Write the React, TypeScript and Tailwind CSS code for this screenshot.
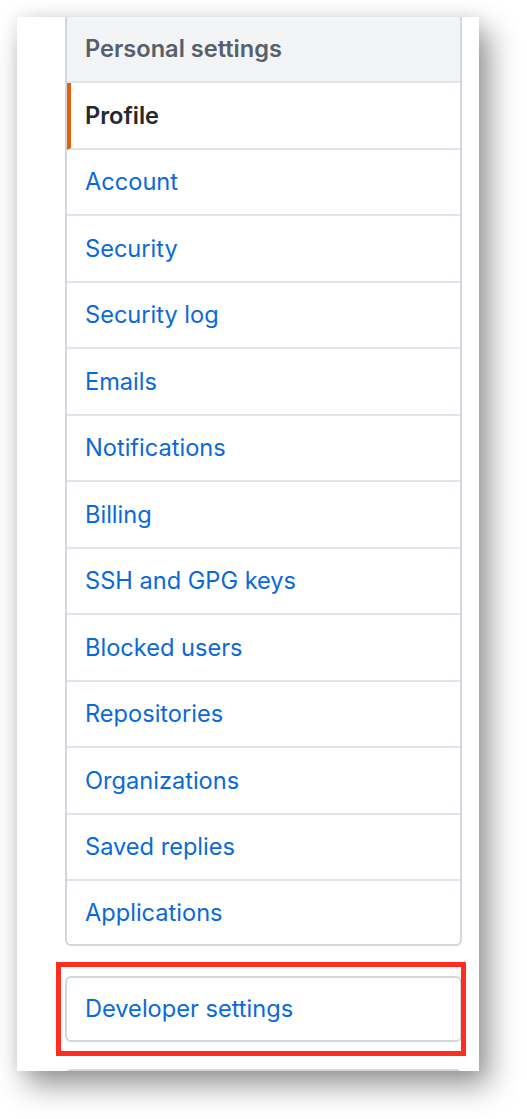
const items = [
  'Account',
  'Security',
  'Security log',
  'Emails',
  'Notifications',
  'Billing',
  'SSH and GPG keys',
  'Blocked users',
  'Repositories',
  'Organizations',
  'Saved replies',
  'Applications',
];

export default function App() {
  return (
    <div className="min-h-[1119px] w-[527px] bg-white pt-[17px] pl-[17px] font-['Inter',sans-serif]">
      <div className="relative h-[1054px] w-[462px] overflow-hidden bg-white pl-[48px] pr-[17px] shadow-[10px_14px_28px_rgba(0,0,0,0.42),0_0_14px_rgba(0,0,0,0.08)]">
        <nav className="rounded-b-[6px] border-2 border-t-0 border-[#d0d7de] text-[23.6px]">
          <div className="flex h-[66px] items-center border-b-2 border-[#e1e4e8] bg-[#f3f4f6] pl-[18px] font-semibold text-[#57606a]">
            Personal settings
          </div>
          <div className="flex h-[66.5px] items-center border-b-2 border-l-4 border-[#e1e4e8] border-l-[#e36209] pl-[14px] font-semibold text-[#24292f]">
            Profile
          </div>
          {items.map((label, idx) => (
            <div
              key={label}
              className={`flex items-center pl-[18px] text-[#0969da] ${
                idx === items.length - 1 ? 'h-[63px]' : 'h-[66.5px] border-b-2 border-[#e1e4e8]'
              }`}
            >
              {label}
            </div>
          ))}
        </nav>

        <div className="mt-[30px] flex h-[66px] items-center rounded-[6px] border-2 border-[#d0d7de] pl-[18px] text-[23.6px] text-[#0969da]">
          Developer settings
        </div>

        <div className="mt-[27px] h-[80px] rounded-t-[6px] border-2 border-[#d0d7de] bg-white" />

        {/* annotation */}
        <div className="absolute left-[39px] top-[945px] h-[94px] w-[410px] border-[5px] border-[#ff2d1f]" />
      </div>
    </div>
  );
}
